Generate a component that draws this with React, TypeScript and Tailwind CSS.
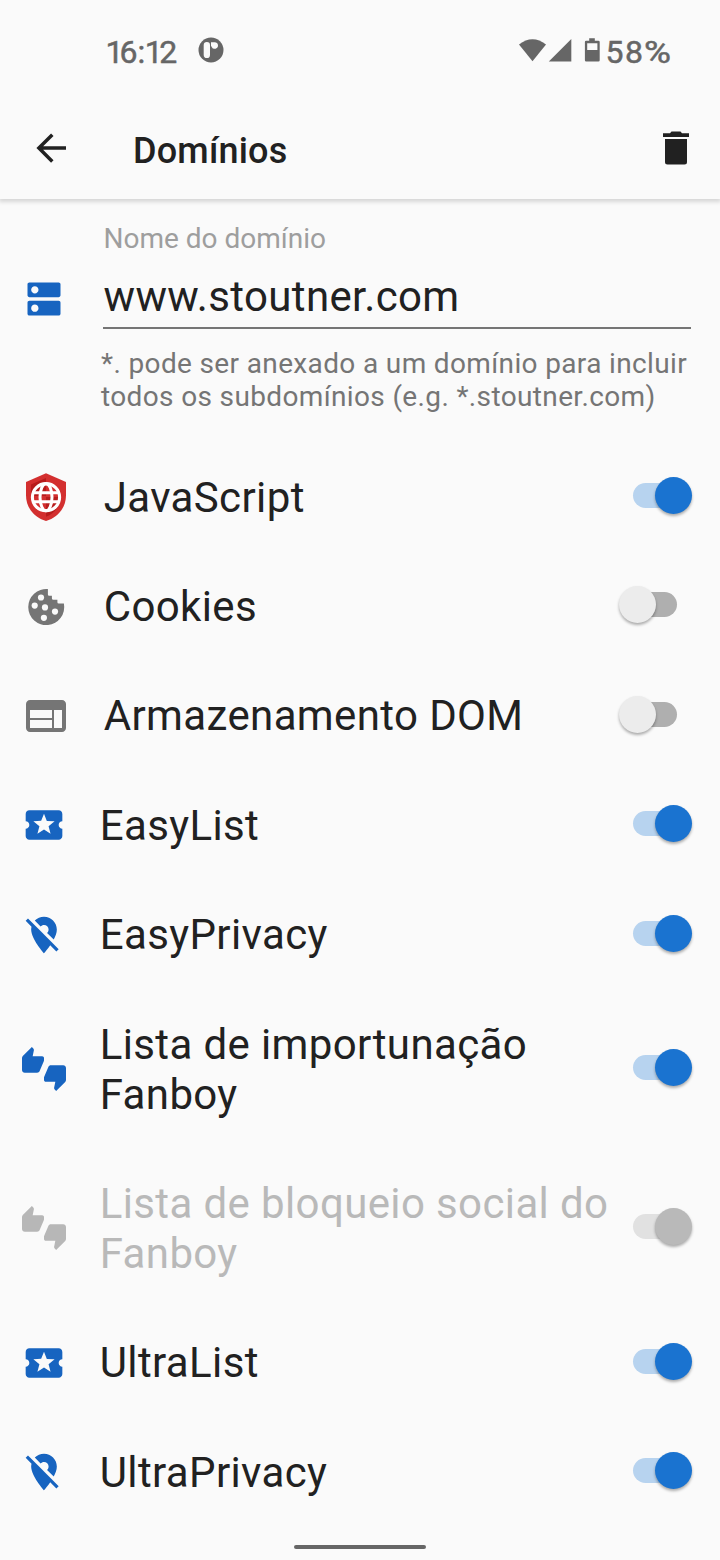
import type { ReactNode } from "react";
import { MdDns, MdLocalActivity, MdLocationOff, MdThumbsUpDown, MdWeb } from "react-icons/md";

function ShieldIcon() {
  return (
    <svg width="48" height="48" viewBox="0 0 48 48" fill="none">
      <path d="M24 0.3 44 9v13.2C44 34.5 36 44.5 24 48 12 44.5 4 34.5 4 22.2V9Z" fill="#d32f2f" />
      <path d="M24 5 9 11.5v11.500h15Z" fill="#b71c1c" />
      <path d="M24 24h15c-1 9.500-6.500 16.500-15 19.800Z" fill="#b71c1c" />
      <circle cx="24" cy="24.200" r="13.600" stroke="#fff" strokeWidth="3.100" />
      <ellipse cx="24" cy="24.200" rx="6" ry="13.500" stroke="#fff" strokeWidth="3" />
      <path d="M11.500 19.700h25M11.500 28.700h25" stroke="#fff" strokeWidth="3" />
    </svg>
  );
}

function CookieIcon() {
  return (
    <svg width="48" height="48" viewBox="0 0 48 48">
      <path
        d="M25.900 6.100v5.400q0 1.200 1.200 1.200h2.800v2.600q0 1.500 1.500 1.500h4v2.400q0 1.300 1.300 1.300h5.200A18 18 0 1 1 25.900 6.100Z"
        fill="#757575"
      />
      <g fill="#fafafa">
        <circle cx="19" cy="14.500" r="3.100" />
        <circle cx="12.700" cy="22.600" r="3.100" />
        <circle cx="23" cy="24.400" r="3.100" />
        <circle cx="33" cy="28.600" r="3.100" />
        <circle cx="21.900" cy="34.800" r="3.100" />
      </g>
    </svg>
  );
}

type State = "on" | "off" | "disabled";

const trackColor: Record<State, string> = { on: "bg-[#b7d3ef]", off: "bg-[#afafaf]", disabled: "bg-[#e1e1e1]" };
const thumbStyle: Record<State, string> = {
  on: "left-[22px] bg-[#1a73d0]",
  off: "left-[-14px] bg-[#ececec]",
  disabled: "left-[22px] bg-[#b9b9b9]",
};

function Toggle({ state }: { state: State }) {
  return (
    <div className={`relative mt-[-3.400px] mr-[43px] h-[25px] w-11 shrink-0 rounded-full ${trackColor[state]}`}>
      <div
        className={`absolute top-[-6px] size-[37px] rounded-full shadow-[0_2px_3px_rgba(0,0,0,0.32)] ${thumbStyle[state]}`}
      />
    </div>
  );
}

interface Setting {
  icon: ReactNode;
  label: string;
  state: State;
  wide?: boolean;
  tall?: boolean;
}

const blue = "#1764c0";
const settings: Setting[] = [
  { icon: <ShieldIcon />, label: "JavaScript", state: "on", wide: true },
  { icon: <CookieIcon />, label: "Cookies", state: "off", wide: true },
  { icon: <MdWeb size={48} color="#757575" />, label: "Armazenamento DOM", state: "off", wide: true },
  { icon: <MdLocalActivity size={44} color={blue} />, label: "EasyList", state: "on" },
  { icon: <MdLocationOff size={44} color={blue} />, label: "EasyPrivacy", state: "on" },
  { icon: <MdThumbsUpDown size={44} color={blue} />, label: "Lista de importunação Fanboy", state: "on", tall: true },
  {
    icon: <MdThumbsUpDown size={44} color="#b7b7b7" />,
    label: "Lista de bloqueio social do Fanboy",
    state: "disabled",
    tall: true,
  },
  { icon: <MdLocalActivity size={44} color={blue} />, label: "UltraList", state: "on" },
  { icon: <MdLocationOff size={44} color={blue} />, label: "UltraPrivacy", state: "on" },
];

function SettingRow({ icon, label, state, wide, tall }: Setting) {
  return (
    <div className={`flex items-center pl-[22px] ${tall ? "h-[159.3px]" : "h-[109.4px]"}`}>
      <div className={`shrink-0 ${wide ? "w-[81.700px]" : "w-[77.700px]"}`}>{icon}</div>
      <div
        className={`shrink-0 text-[42px] tracking-[0.38px] ${tall ? "pt-[1px] leading-[50px]" : "pt-[0.6px] leading-[49.7px]"} ${
          wide ? "w-[529.300px]" : "w-[533.300px]"
        } ${state === "disabled" ? "text-[#b9b9b9]" : "text-[#212121]"}`}
      >
        {label}
      </div>
      <Toggle state={state} />
    </div>
  );
}

function StatusBar() {
  return (
    <div className="flex h-[100px] items-center pl-[105.500px] text-[32px] text-[#666666]">
      <span className="w-[92.500px] pt-[4px] [-webkit-text-stroke:0.5px_#666666]">
        <span className="tracking-[-4px]">1</span>
        <span className="tracking-[0px]">6</span>
        <span className="tracking-[-0.5px]">:</span>
        <span className="tracking-[-3.500px]">1</span>2
      </span>
      <svg width="26" height="26" viewBox="0 0 26 26" className="mb-[1px]">
        <circle cx="13" cy="13" r="12.500" fill="#666" />
        <rect x="5.700" y="5" width="6.300" height="16" rx="3.100" fill="#fafafa" />
        <path d="M13 5.200h3.700a3.300 3.300 0 1 1-3 4.700q-.3-.8-.7-.9Z" fill="#fafafa" />
      </svg>
      <svg width="86" height="28" viewBox="0 0 86 28" fill="#666" className="ml-[293px]">
        <path d="M2 8.500Q15.500-2.200 29 8.500L15.500 25.200Z" />
        <path d="M54.300 3v22.500H31.800Z" />
        <path
          fillRule="evenodd"
          d="M72.200 2.300h5.600v2.400h3.600q1.300 0 1.300 1.300v18.200q0 1.300-1.300 1.300H69.200q-1.300 0-1.300-1.300V6q0-1.300 1.300-1.300h3ZM70.200 7.200v6.900h10.200V7.200Z"
        />
      </svg>
      <span className="ml-[2.500px] flex pt-[4px] tracking-[1.400px] [-webkit-text-stroke:0.5px_#666666]">
        58<span className="origin-left scale-x-115">%</span>
      </span>
    </div>
  );
}

export default function App() {
  return (
    <div className="flex h-[1560px] w-[720px] flex-col overflow-hidden bg-[#fafafa] font-['Roboto',sans-serif] text-[#212121]">
      <header className="relative h-[199px] shrink-0 shadow-[0_2px_4px_1px_rgba(0,0,0,0.14)]">
        <StatusBar />
        <div className="flex h-[97px] items-center pl-[36px]">
          <svg width="31" height="31" viewBox="0 0 31 31" fill="none" stroke="#212121" strokeWidth="3.500" className="mb-[1px]">
            <path d="M16.300 1.700 2.900 15.100 16.300 28.500M2.900 15.100H30" />
          </svg>
          <h1 className="ml-[66px] w-[530px] pt-[4px] text-[36px] font-medium tracking-[0.2px]">Domínios</h1>
          <svg width="26" height="34" viewBox="0 0 26 34" fill="#212121" className="mb-[2px]">
            <path d="M0 2.300h7L8.500.5h9L19 2.300h7v3.600H0ZM2 8h22v23q0 2.500-2.500 2.500h-17Q2 33.500 2 31Z" />
          </svg>
        </div>
      </header>

      <section className="flex h-[243.500px] shrink-0 items-start pl-[22px]">
        <MdDns size={44} color={blue} className="mt-[77.500px]" />
        <div className="flex flex-col">
          <label className="mt-[23px] ml-[37.500px] h-[33px] text-[28px] leading-[34px] text-[#9e9e9e]">Nome do domínio</label>
          <div className="ml-[37px] h-[73.500px] w-[588px] border-b-2 border-[#757575] pt-[16.500px] pl-[0.5px] text-[42px] leading-[50px] tracking-[0.37px]">
            www.stoutner.com
          </div>
          <p className="mt-[18.500px] ml-[35px] w-[600px] text-[28px] leading-[33px] tracking-[0.36px] text-[#757575]">
            *. pode ser anexado a um domínio para incluir
            <br />
            todos os subdomínios (e.g. *.stoutner.com)
          </p>
        </div>
      </section>

      <main className="flex flex-col">
        {settings.map((item) => (
          <SettingRow key={item.label} {...item} />
        ))}
      </main>
      <div className="mt-[18px] h-1 w-[132px] shrink-0 self-center rounded-full bg-[#666666]" />
    </div>
  );
}
